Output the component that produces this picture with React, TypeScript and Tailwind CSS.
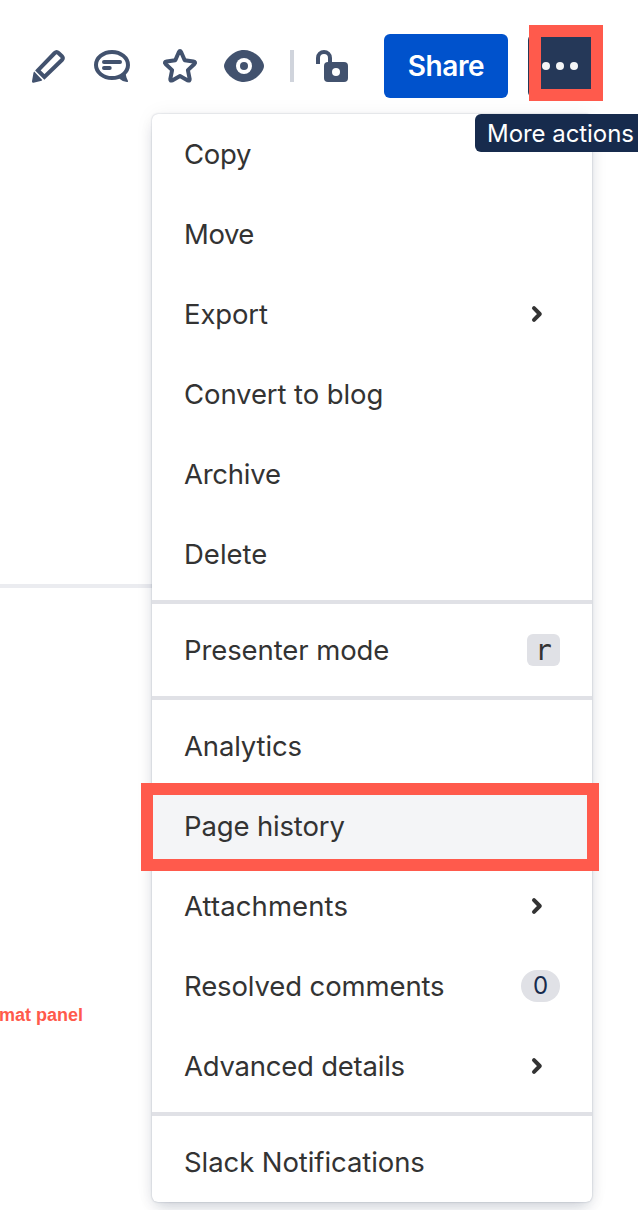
import type { ReactNode } from "react";

type Item = { label: string; tracking: string; end?: ReactNode; active?: boolean };

function Chevron() {
  return (
    <svg className="mr-[11px] h-8 w-6" viewBox="0 0 24 32" fill="none" stroke="#333" strokeWidth="4" strokeLinecap="round" strokeLinejoin="round">
      <path d="M9 10.2 14.8 16 9 21.8" />
    </svg>
  );
}

const sections: Item[][] = [
  [
    { label: "Copy", tracking: "tracking-[-0.3px]" },
    { label: "Move", tracking: "tracking-[-0.45px]" },
    { label: "Export", tracking: "tracking-[-0.15px]", end: <Chevron /> },
    { label: "Convert to blog", tracking: "tracking-[-0.1px]" },
    { label: "Archive", tracking: "tracking-[-0.25px]" },
    { label: "Delete", tracking: "tracking-[0px]" },
  ],
  [
    {
      label: "Presenter mode",
      tracking: "tracking-[-0.1px]",
      end: (
        <kbd className="flex h-8 w-[33px] items-center justify-center rounded-md bg-[#e0e1e6] pt-0.5 font-['DejaVu_Sans_Mono',monospace] text-[28px] leading-8">
          r
        </kbd>
      ),
    },
  ],
  [
    { label: "Analytics", tracking: "tracking-[-0.15px]" },
    { label: "Page history", tracking: "tracking-[-0.15px]", active: true },
    { label: "Attachments", tracking: "tracking-[0.1px]", end: <Chevron /> },
    {
      label: "Resolved comments",
      tracking: "tracking-[-0.12px]",
      end: (
        <span className="flex h-8 w-[39px] items-center justify-center rounded-full bg-[#e0e1e6] text-2xl leading-8 text-[#172b4d]">0</span>
      ),
    },
    { label: "Advanced details", tracking: "tracking-[-0.23px]", end: <Chevron /> },
  ],
  [{ label: "Slack Notifications", tracking: "tracking-[-0.08px]" }],
];

function MenuItem({ item }: { item: Item }) {
  return (
    <li className={`relative flex h-20 items-center justify-between pr-8 pl-8 ${item.active ? "bg-[#f4f5f7]" : ""}`}>
      <span className={`whitespace-nowrap ${item.tracking}`}>{item.label}</span>
      {item.end}
      {item.active && <span className="absolute -top-[3px] -left-[11px] h-[88px] w-[458px] border-12 border-[#ff5a4c]" />}
    </li>
  );
}

function Toolbar() {
  return (
    <header className="flex h-[114px] items-start pt-[34px] pl-6">
      <div className="mt-2 flex h-12 items-center text-[#42526e]">
        <svg className="h-12 w-12" viewBox="24 42 48 48">
          <path d="M37.9 70.4 54.7 53Q56.6 51.2 58.5 53L61.9 56.2Q63.7 58.1 61.9 60L44.4 77Z" fill="none" stroke="currentColor" strokeWidth="4" />
          <path d="M34.2 71.6 42.2 79.9Q41.8 80.7 40.7 81L33.5 82.7Q31.7 83 32 81.3L33.4 73.2Q33.6 72.1 34.2 71.6Z" fill="currentColor" />
        </svg>
        <svg className="ml-4 h-12 w-12" viewBox="88 42 48 48" fill="none" stroke="currentColor" strokeWidth="4">
          <ellipse cx="112" cy="65" rx="16" ry="13" />
          <path d="M119 78.5 125.5 73.5 126.5 77.5 128 81Q128.4 82.2 127 82Q122 81.4 119 78.5Z" fill="currentColor" stroke="none" />
          <path d="M104 62H120M104 68H109.7" strokeLinecap="round" />
        </svg>
        <svg className="ml-5 h-12 w-12" viewBox="156 42 48 48" fill="none" stroke="currentColor" strokeWidth="4" strokeLinejoin="round">
          <path d="M178.8 52.2Q180 50 181.2 52.2L184.7 60.2 193.4 61.4Q196.2 62 194.4 64L187.9 70.1 189.7 79.1Q189.8 81.2 187.8 80.4L180 76.1 172.2 80.4Q170.2 81.2 170.3 79.1L172.1 70.1 165.6 64Q163.8 62 166.6 61.4L175.3 60.2Z" />
        </svg>
        <svg className="ml-4 h-12 w-12" viewBox="220 42 48 48" fill="currentColor">
          <path d="M224 66C224 61 232.5 50 244 50S264 61 264 66 255.5 82 244 82 224 71 224 66Z" />
          <circle cx="244" cy="66" r="8" fill="#fff" />
          <circle cx="244" cy="66" r="4" />
        </svg>
        <span className="ml-[22px] h-8 w-1 bg-[#d0d4dc]" />
        <svg className="ml-[14px] h-12 w-12" viewBox="308 42 48 48" fill="currentColor">
          <path d="M318 64V58A6 6 0 0 1 330 58V63" fill="none" stroke="currentColor" strokeWidth="4" />
          <rect x="324" y="62" width="24" height="20" rx="4" />
          <circle cx="336" cy="72" r="4" fill="#fff" />
        </svg>
      </div>
      <button className="ml-7 h-16 w-[124px] rounded-md bg-[#0052cc] text-[28px] leading-none font-semibold tracking-[-0.4px] text-white">
        Share
      </button>
      <button className="relative ml-5 h-16 w-16 rounded-md bg-[#253858]">
        <svg className="h-16 w-16" viewBox="528 34 64 64" fill="#f4f5f7">
          <circle cx="546" cy="66" r="4" />
          <circle cx="560" cy="66" r="4" />
          <circle cx="574" cy="66" r="4" />
        </svg>
        <span className="absolute -top-[9px] left-[1px] h-[76px] w-[74px] border-12 border-[#ff5a4c]" />
      </button>
    </header>
  );
}

export default function App() {
  return (
    <div className="relative h-[1210px] w-[638px] overflow-hidden bg-white font-['Inter',sans-serif] text-[#333]">
      <Toolbar />
      <main className="flex">
        <aside className="flex w-[152px] flex-col overflow-hidden pt-[470px]">
          <hr className="h-1 border-0 bg-[#ebecf0]" />
          <p className="mt-[417px] flex w-[83px] justify-end font-['Liberation_Sans',sans-serif] text-[18px] leading-5 font-bold whitespace-nowrap text-[#ff5a4c]">
            mat panel
          </p>
        </aside>
        <nav className="w-[440px] rounded-md bg-white text-[27.5px] leading-8 shadow-[0_8px_16px_-4px_rgba(9,30,66,0.2),0_0_2px_rgba(9,30,66,0.28),0_0_20px_rgba(9,30,66,0.05)]">
          {sections.map((items, i) => (
            <ul key={i} className={i > 0 ? "mt-1.5 border-t-4 border-[#e0e1e6] pt-1.5" : ""}>
              {items.map((item) => (
                <MenuItem key={item.label} item={item} />
              ))}
            </ul>
          ))}
        </nav>
      </main>
      <div className="absolute top-[114px] left-[475px] flex h-[38px] w-[180px] items-center rounded-md bg-[#172b4d] pt-0.5 pl-3 text-2xl tracking-[-0.05px] whitespace-nowrap text-white">
        More actions
      </div>
    </div>
  );
}
